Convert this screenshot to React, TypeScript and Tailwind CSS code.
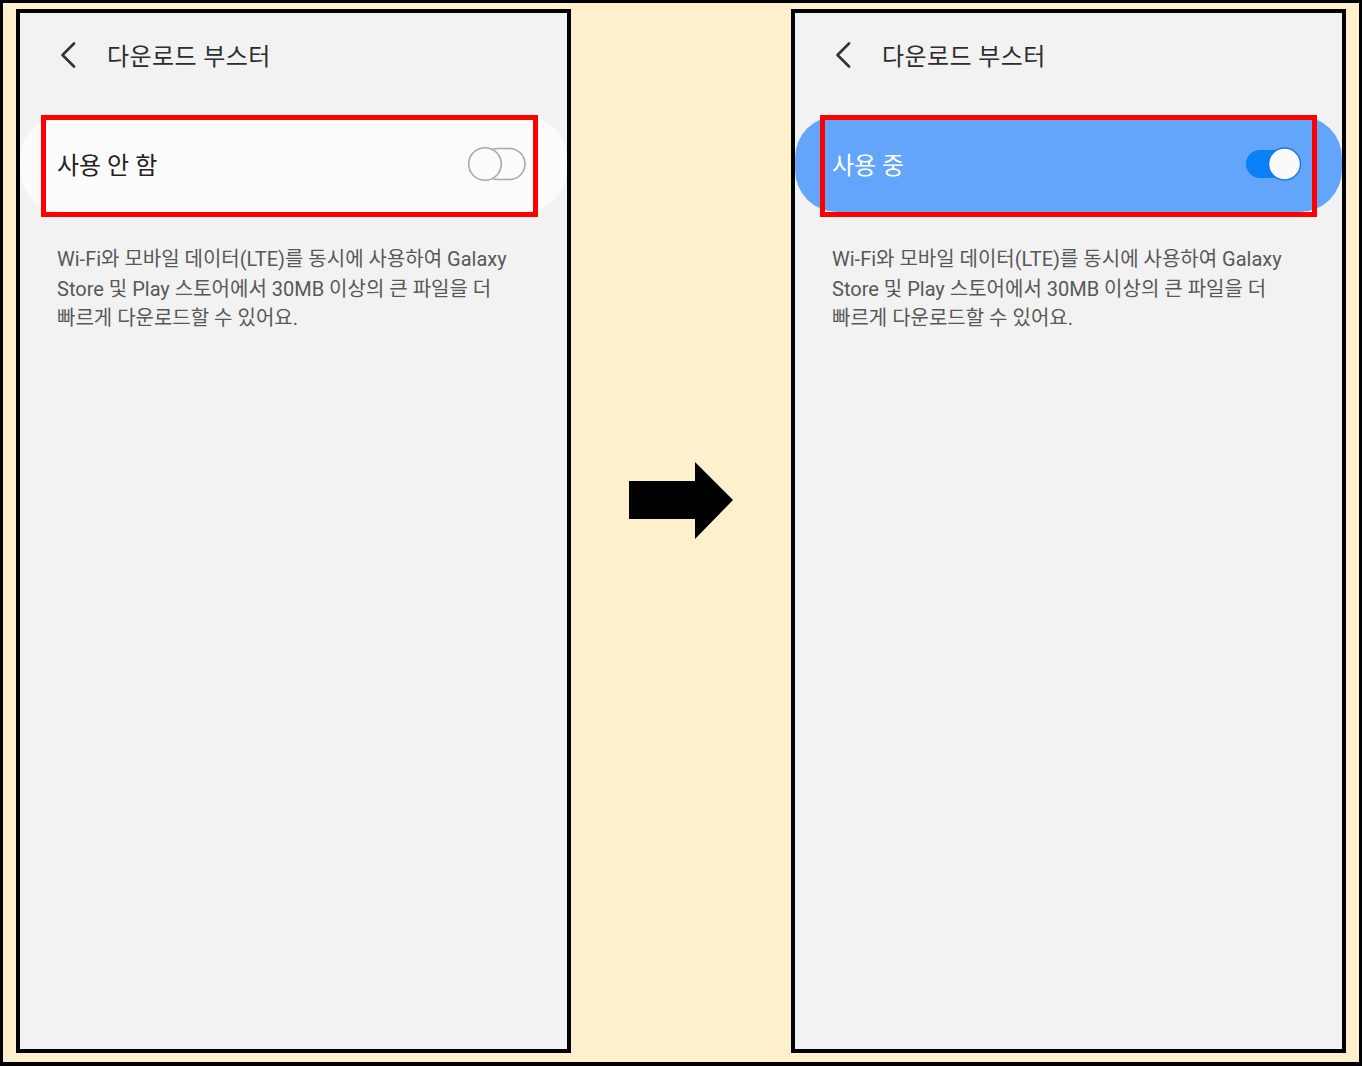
import React from "react";

const font = { fontFamily: "Roboto, 'Noto Sans CJK KR', sans-serif" };

function Chevron() {
  return (
    <svg width="16" height="26" viewBox="0 0 16 26" className="shrink-0">
      <path d="M14 1.5 L2.5 13 L14 24.5" fill="none" stroke="#333" strokeWidth="2.6" strokeLinecap="round" strokeLinejoin="round" />
    </svg>
  );
}

function ToggleOff() {
  return (
    <svg width="60" height="36" viewBox="0 0 60 36">
      <rect x="15" y="2.5" width="43" height="31" rx="15.5" fill="none" stroke="#a9a9a9" strokeWidth="1.6" />
      <circle cx="18" cy="18" r="16.3" fill="#fbfbfb" stroke="#a9a9a9" strokeWidth="1.6" />
    </svg>
  );
}

function ToggleOn() {
  return (
    <svg width="58" height="36" viewBox="0 0 58 36">
      <rect x="1" y="4" width="54" height="28" rx="14" fill="#0a80f6" />
      <circle cx="39.5" cy="18" r="16" fill="#fafafa" stroke="#1479e6" strokeWidth="1.4" />
    </svg>
  );
}

function Panel({ on }: { on: boolean }) {
  return (
    <div className="w-[555px] h-[1044px] border-4 border-black bg-[#f2f2f2] flex flex-col shrink-0" style={font}>
      <div className="h-[84px] flex items-center pl-[40px] gap-[31px]">
        <Chevron />
        <span className="text-[24px] text-[#2d2d2d] tracking-[0.4px] mt-[3px]">다운로드 부스터</span>
      </div>
      <div className="relative mt-[19px]">
        <div
          className={
            on
              ? "h-[96px] rounded-[42px] bg-[#62a5fa] flex items-center justify-between pl-[37px] pr-[39px]"
              : "h-[96px] rounded-[42px] bg-[#fbfbfb] flex items-center justify-between pl-[37px] pr-[40px]"
          }
        >
          <span className={on ? "text-[24px] text-white mt-[3px]" : "text-[24px] text-[#222] mt-[3px]"}>
            {on ? "사용 중" : "사용 안 함"}
          </span>
          {on ? <ToggleOn /> : <ToggleOff />}
        </div>
        <div
          className={
            on
              ? "absolute left-[25px] right-[25px] top-[-1px] bottom-[-5px] border-[5px] border-[#ff0000]"
              : "absolute left-[21px] right-[29px] top-[-1px] bottom-[-5px] border-[5px] border-[#ff0000]"
          }
        />
      </div>
      <div className="mt-[33px] pl-[37px] text-[20px] leading-[29.5px] text-[#585858] whitespace-nowrap">
        <div>Wi-Fi와 모바일 데이터(LTE)를 동시에 사용하여 Galaxy</div>
        <div>Store 및 Play 스토어에서 30MB 이상의 큰 파일을 더</div>
        <div>빠르게 다운로드할 수 있어요.</div>
      </div>
    </div>
  );
}

export default function App() {
  return (
    <div className="w-[1362px] h-[1066px] border-[3px] border-b-4 border-black bg-[#fef0cd] flex pt-[6px] pl-[13px] pr-[13px] pb-[9px]">
      <Panel on={false} />
      <div className="w-[220px] shrink-0 flex justify-center pt-[452px]">
        <svg width="106" height="80" viewBox="0 0 106 80">
          <polygon points="1,20 67,20 67,1 105,39 67,78 67,58 1,58" fill="#000" />
        </svg>
      </div>
      <Panel on={true} />
    </div>
  );
}
